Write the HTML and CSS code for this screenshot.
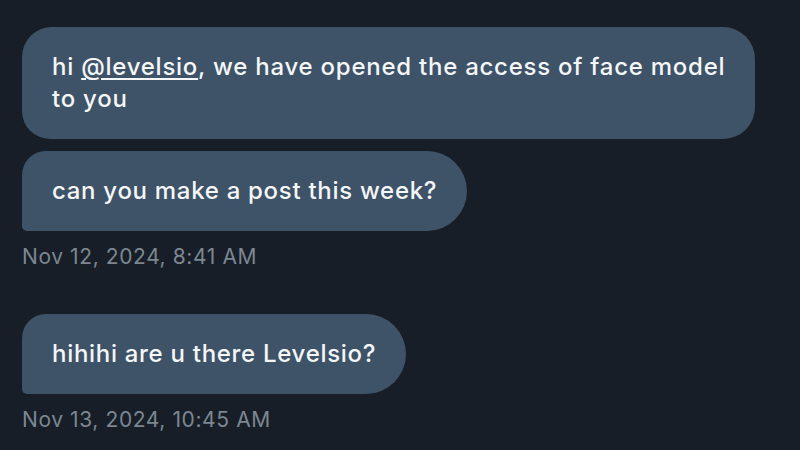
FILE: index.html
```html
<!DOCTYPE html>
<html>
<head>
<meta charset="utf-8">
<link rel="stylesheet" href="styles.css">
</head>
<body>
<div class="thread">
  <div class="group">
    <div class="bubble first">hi <a class="mention">@levelsio</a>, we have opened the access of face model<br>to you</div>
    <div class="bubble last">can you make a post this week?</div>
    <div class="time">Nov 12, 2024, 8:41 AM</div>
  </div>
  <div class="group second">
    <div class="bubble single">hihihi are u there Levelsio?</div>
    <div class="time">Nov 13, 2024, 10:45 AM</div>
  </div>
</div>
</body>
</html>
```
FILE: styles.css
```css
html, body {
  margin: 0;
  padding: 0;
  background: #171e27;
  width: 800px;
  height: 450px;
  overflow: hidden;
}
.thread {
  padding: 27px 0 0 22px;
  font-family: Inter, "Noto Sans", sans-serif;
}
.group {
  display: flex;
  flex-direction: column;
  align-items: flex-start;
  gap: 12px;
}
.second {
  margin-top: 45px;
}
.bubble {
  background: #3e5367;
  color: #f4f6f8;
  font-size: 24px;
  font-weight: 500;
  letter-spacing: 0.7px;
  line-height: 32px;
  padding: 24px 30px;
  border-radius: 40px;
  white-space: nowrap;
}
.first {
  letter-spacing: 0.75px;
  border-radius: 30px 32px 32px 28px;
}
.last, .single {
  border-radius: 24px 40px 40px 5px;
}
.mention {
  color: inherit;
  text-decoration: underline;
  text-underline-offset: 3px;
  text-decoration-thickness: 1.5px;
}
.time {
  color: #7c8792;
  font-size: 21px;
  letter-spacing: 0.6px;
  line-height: 24px;
  margin-top: 2px;
}
```
